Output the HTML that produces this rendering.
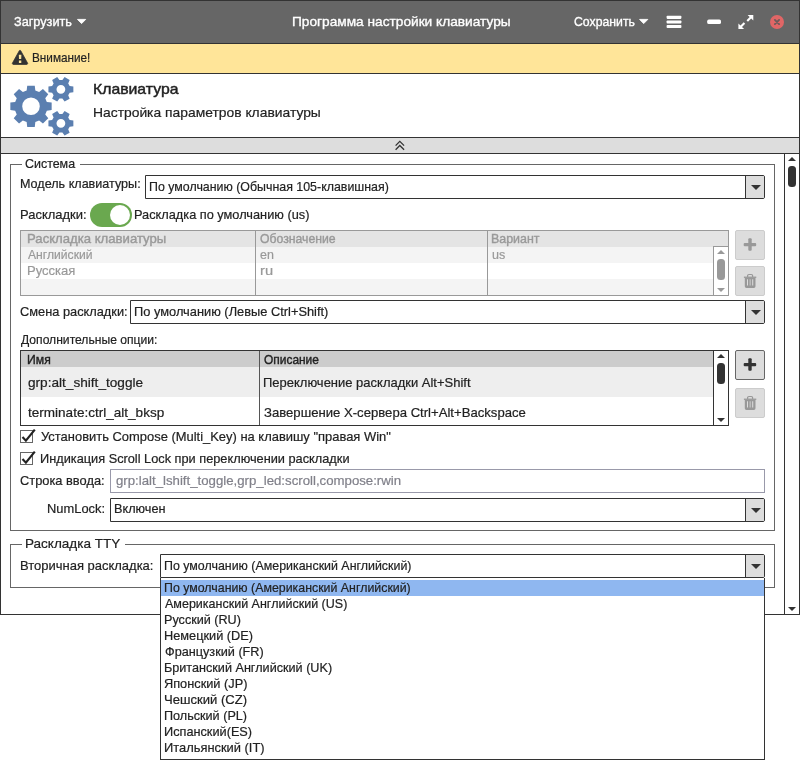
<!DOCTYPE html>
<html lang="ru">
<head>
<meta charset="utf-8">
<title>Программа настройки клавиатуры</title>
<style>
html,body{margin:0;padding:0;background:#fff;}
body{width:800px;height:761px;position:relative;overflow:hidden;font-family:"Liberation Sans",sans-serif;font-size:13px;color:#222;}
.abs{position:absolute;}
#txt{position:absolute;left:0;top:0;width:800px;height:761px;will-change:transform;}
.t{position:absolute;white-space:nowrap;line-height:16px;height:16px;transform-origin:0 50%;display:inline-block;-webkit-text-stroke:0.2px;}
#win{left:0;top:0;width:798px;height:613px;border:1px solid #333;background:#fff;}
#hdr{left:1px;top:1px;width:798px;height:42px;background:#666;}
#hdrline{left:1px;top:43px;width:798px;height:1px;background:#333;}
#warn{left:1px;top:44px;width:798px;height:29px;background:#ffe599;}
#warnline{left:1px;top:73px;width:798px;height:1px;background:#333;}
#bar{left:1px;top:137px;width:798px;height:15px;background:#ddd;border-top:1px solid #333;border-bottom:1px solid #333;}
#sbar{left:784px;top:154px;width:1px;height:460px;background:#333;}
.sel{position:absolute;box-sizing:border-box;border:1px solid #333;background:#fff;height:24px;border-radius:0 2px 2px 0;}
.sel .btn{position:absolute;right:0;top:0;width:18px;height:22px;background:#ddd;border-left:1px solid #333;border-radius:0 1px 1px 0;}
.sel .btn:after{content:"";position:absolute;left:4.5px;top:9px;border-left:5px solid transparent;border-right:5px solid transparent;border-top:5px solid #333;}
.fs{position:absolute;box-sizing:border-box;border:1px solid #666;}
.gap{position:absolute;background:#fff;height:3px;}
.tri-u{position:absolute;width:0;height:0;border-left:4.5px solid transparent;border-right:4.5px solid transparent;border-bottom:4.5px solid #333;}
.tri-d{position:absolute;width:0;height:0;border-left:4.5px solid transparent;border-right:4.5px solid transparent;border-top:4.5px solid #333;}
.thumb{position:absolute;width:8px;border-radius:3.5px;background:#333;}
.tbl{position:absolute;box-sizing:border-box;}
.row{position:absolute;left:0;}
.ibtn{position:absolute;box-sizing:border-box;width:30px;height:30px;border-radius:2px;background:#ddd;border:1px solid #ccc;}
.cb{position:absolute;box-sizing:border-box;width:13px;height:13px;border:1px solid #666;background:#fff;}
</style>
</head>
<body>
<div id="win" class="abs"></div>
<div id="hdr" class="abs"></div>
<div id="hdrline" class="abs"></div>
<div id="warn" class="abs"></div>
<div id="warnline" class="abs"></div>
<div id="bar" class="abs"></div>

<!-- header icons -->
<svg class="abs" style="left:0;top:0" width="800" height="44" viewBox="0 0 800 44">
  <path d="M77.5 19.4h8.2l-4.1 4.2z" fill="#fff" stroke="#fff" stroke-width="0.9" stroke-linejoin="round"/>
  <path d="M639.6 19.4h8.2l-4.1 4.2z" fill="#fff" stroke="#fff" stroke-width="0.9" stroke-linejoin="round"/>
  <g fill="#fff">
    <rect x="666.6" y="15.8" width="14.8" height="3.1" rx="0.8"/>
    <rect x="666.6" y="20.4" width="14.8" height="3.1" rx="0.8"/>
    <rect x="666.6" y="25" width="14.8" height="3.1" rx="0.8"/>
    <rect x="707.2" y="19.6" width="13.8" height="4.5" rx="1.6"/>
  </g>
  <g fill="#fff">
    <path d="M753.3 14.9V20.5L751.19 18.44 747.99 21.64 746.51 20.16 749.71 16.96 747.6 14.9Z"/>
    <path d="M738.4 29.1V23.5L740.51 25.56 743.71 22.36 745.19 23.84 741.99 27.04 744.1 29.1Z"/>
  </g>
  <circle cx="777" cy="22" r="7" fill="#e06666"/>
  <path d="M774.9 19.9l4.2 4.2M779.1 19.9l-4.2 4.2" stroke="#6a5a5a" stroke-width="1.8" stroke-linecap="round"/>
</svg>

<!-- warning icon -->
<svg class="abs" style="left:10px;top:46px" width="22" height="24" viewBox="10 46 22 24">
  <path d="M19.3 50.7 L12.5 63 a0.9 0.9 0 0 0 0.8 1.4 h13.4 a0.9 0.9 0 0 0 0.8 -1.4 L20.7 50.7 a0.8 0.8 0 0 0 -1.4 0z" fill="#333" stroke="#333" stroke-width="0.8" stroke-linejoin="round"/>
  <path d="M18.8 54.7h2.6l-0.2 4.3h-2.2z M18.9 60.5h2.4v2.4h-2.4z" fill="#ffe599"/>
</svg>

<svg class="abs" style="left:0;top:74px" width="90" height="64" viewBox="0 74 90 64"><path fill="#5b7fb0" fill-rule="evenodd" d="M46.82 101.97 L51.66 102.53 L51.66 110.07 L46.82 110.63 L45.25 114.43 L48.28 118.24 L42.94 123.58 L39.13 120.55 L35.33 122.12 L34.77 126.96 L27.23 126.96 L26.67 122.12 L22.87 120.55 L19.06 123.58 L13.72 118.24 L16.75 114.43 L15.18 110.63 L10.34 110.07 L10.34 102.53 L15.18 101.97 L16.75 98.17 L13.72 94.36 L19.06 89.02 L22.87 92.05 L26.67 90.48 L27.23 85.64 L34.77 85.64 L35.33 90.48 L39.13 92.05 L42.94 89.02 L48.28 94.36 L45.25 98.17Z M22.20 106.30 a8.80 8.80 0 1 0 17.60 0 a8.80 8.80 0 1 0 -17.60 0Z M69.68 85.93 L73.36 86.38 L73.36 92.22 L69.68 92.67 L68.21 95.22 L69.66 98.63 L64.60 101.55 L62.37 98.58 L59.43 98.58 L57.20 101.55 L52.14 98.63 L53.59 95.22 L52.12 92.67 L48.44 92.22 L48.44 86.38 L52.12 85.93 L53.59 83.38 L52.14 79.97 L57.20 77.05 L59.43 80.02 L62.37 80.02 L64.60 77.05 L69.66 79.97 L68.21 83.38Z M56.50 89.30 a4.40 4.40 0 1 0 8.80 0 a4.40 4.40 0 1 0 -8.80 0Z M69.68 119.93 L73.36 120.38 L73.36 126.22 L69.68 126.67 L68.21 129.22 L69.66 132.63 L64.60 135.55 L62.37 132.58 L59.43 132.58 L57.20 135.55 L52.14 132.63 L53.59 129.22 L52.12 126.67 L48.44 126.22 L48.44 120.38 L52.12 119.93 L53.59 117.38 L52.14 113.97 L57.20 111.05 L59.43 114.02 L62.37 114.02 L64.60 111.05 L69.66 113.97 L68.21 117.38Z M56.50 123.30 a4.40 4.40 0 1 0 8.80 0 a4.40 4.40 0 1 0 -8.80 0Z"/></svg>

<!-- collapse chevrons -->
<svg class="abs" style="left:390px;top:138px" width="20" height="15" viewBox="390 138 20 15">
  <path d="M395.6 145.6 L399.8 141.4 L404.1 145.6 M395.6 149.7 L399.8 145.5 L404.1 149.7" fill="none" stroke="#333" stroke-width="1.3"/>
</svg>

<!-- main scrollbar -->
<div id="sbar" class="abs"></div>
<div class="tri-u" style="left:787.7px;top:156.8px"></div>
<div class="thumb" style="left:788px;top:166px;height:21px"></div>
<div class="tri-d" style="left:787.7px;top:607px"></div>

<!-- fieldset 1 -->
<div class="fs" style="left:10px;top:164px;width:765px;height:367px"></div>
<div class="gap" style="left:21.5px;top:163px;width:58px"></div>

<div class="sel" style="left:145px;top:175px;width:620px"><div class="btn"></div></div>

<!-- toggle -->
<div class="abs" style="left:90px;top:203px;width:42px;height:24px;border-radius:12px;background:#6aa84f;"></div>
<div class="abs" style="left:109.5px;top:205px;width:20px;height:20px;border-radius:10px;background:#fff;"></div>

<!-- table 1 -->
<div class="tbl" style="left:20px;top:230px;width:709px;height:66px;border:1px solid #999;background:#fff;overflow:hidden">
  <div class="row" style="top:0;width:707px;height:16px;background:#e4e4e4"></div>
  <div class="row" style="top:16px;width:693px;height:16px;background:#f4f4f4"></div>
  <div class="row" style="top:48px;width:693px;height:16px;background:#f4f4f4"></div>
  <div class="abs" style="left:234px;top:0;width:1px;height:64px;background:#999"></div>
  <div class="abs" style="left:466px;top:0;width:1px;height:64px;background:#999"></div>
  <div class="abs" style="left:692px;top:15px;width:15px;height:49px;background:#fff;border-left:1px solid #999;border-top:1px solid #999"></div>
</div>
<div class="tri-u" style="left:716.7px;top:249.7px;border-bottom-color:#999"></div>
<div class="thumb" style="left:717px;top:259px;height:21px;background:#999"></div>
<div class="tri-d" style="left:716.7px;top:288px;border-top-color:#999"></div>

<div class="ibtn" style="left:735px;top:230px"></div>
<div class="ibtn" style="left:735px;top:266px"></div>
<svg class="abs" style="left:735px;top:230px" width="30" height="66" viewBox="735 230 30 66">
  <g fill="#999"><rect x="743.7" y="243" width="12.5" height="3.2" rx="1"/><rect x="748.3" y="238.3" width="3.4" height="12.5" rx="1"/></g>
  <g fill="#999">
    <path d="M743.9 276.6h12.4v1.3h-12.4z"/>
    <path d="M747.6 277v-1.2a1.3 1.3 0 0 1 1.3 -1.3h2.4a1.3 1.3 0 0 1 1.3 1.3v1.2" fill="none" stroke="#999" stroke-width="1.2"/>
    <path fill-rule="evenodd" d="M744.8 277.8h10.7v8.5a1.6 1.6 0 0 1 -1.6 1.6h-7.5a1.6 1.6 0 0 1 -1.6 -1.6z M747 279.2v6.3h1v-6.3z M749.7 279.2v6.3h0.8v-6.3z M752.2 279.2v6.3h1v-6.3z"/>
  </g>
</svg>

<div class="sel" style="left:130px;top:300px;width:635px"><div class="btn"></div></div>

<!-- table 2 -->
<div class="tbl" style="left:20px;top:350px;width:709px;height:76px;border:1px solid #333;background:#fff;overflow:hidden">
  <div class="row" style="top:0;width:693px;height:16px;background:#ccc"></div>
  <div class="row" style="top:16px;width:693px;height:30px;background:#eee"></div>
  <div class="abs" style="left:238px;top:0;width:1px;height:74px;background:#555"></div>
  <div class="abs" style="left:692px;top:0;width:15px;height:74px;background:#fff;border-left:1px solid #333"></div>
</div>
<div class="tri-u" style="left:716.7px;top:353.8px"></div>
<div class="thumb" style="left:717px;top:363px;height:21px"></div>
<div class="tri-d" style="left:716.7px;top:418px"></div>

<div class="ibtn" style="left:735px;top:350px;border-color:#666"></div>
<div class="ibtn" style="left:735px;top:388px"></div>
<svg class="abs" style="left:735px;top:350px" width="30" height="70" viewBox="735 350 30 70">
  <g fill="#333"><rect x="743.7" y="363" width="12.5" height="3.2" rx="1"/><rect x="748.3" y="358.3" width="3.4" height="12.5" rx="1"/></g>
  <g fill="#999" transform="translate(0 122)">
    <path d="M743.9 276.6h12.4v1.3h-12.4z"/>
    <path d="M747.6 277v-1.2a1.3 1.3 0 0 1 1.3 -1.3h2.4a1.3 1.3 0 0 1 1.3 1.3v1.2" fill="none" stroke="#999" stroke-width="1.2"/>
    <path fill-rule="evenodd" d="M744.8 277.8h10.7v8.5a1.6 1.6 0 0 1 -1.6 1.6h-7.5a1.6 1.6 0 0 1 -1.6 -1.6z M747 279.2v6.3h1v-6.3z M749.7 279.2v6.3h0.8v-6.3z M752.2 279.2v6.3h1v-6.3z"/>
  </g>
</svg>

<!-- checkboxes -->
<div class="cb" style="left:20px;top:430px"></div>
<div class="cb" style="left:20px;top:452px"></div>
<svg class="abs" style="left:18px;top:426px" width="22" height="42" viewBox="18 426 22 42">
  <path d="M22.5 437.1 L25.9 440.7 L34.8 429.6" fill="none" stroke="#222" stroke-width="2.2"/>
  <path d="M22.5 459.1 L25.9 462.7 L34.8 451.6" fill="none" stroke="#222" stroke-width="2.2"/>
</svg>

<!-- input -->
<div class="abs" style="left:110px;top:469px;width:653px;height:22px;border:1px solid #9999aa;background:#fff"></div>
<div class="sel" style="left:110px;top:498px;width:655px"><div class="btn"></div></div>

<!-- fieldset 2 -->
<div class="fs" style="left:10px;top:544px;width:765px;height:44px"></div>
<div class="gap" style="left:22px;top:543px;width:103px"></div>
<div class="sel" style="left:160px;top:554px;width:605px"><div class="btn"></div></div>

<!-- dropdown -->
<div class="abs" style="left:160px;top:578px;width:603px;height:181px;border:1px solid #333;border-top:none;background:#fff"></div>
<div class="abs" style="left:161px;top:580px;width:603px;height:16px;background:#8fb7f0"></div>

<div id="txt">
<span class="t" id="t_load" style="left:14.14px;top:14px;font-size:13.5px;line-height:15px;height:15px;color:#fff;-webkit-text-stroke:0.35px;transform:scaleX(0.9403);">Загрузить</span>
<span class="t" id="t_title" style="left:292.09px;top:14px;font-size:13.5px;line-height:15px;height:15px;color:#fff;-webkit-text-stroke:0.35px;transform:scaleX(1.0136);">Программа настройки клавиатуры</span>
<span class="t" id="t_save" style="left:574.40px;top:14px;font-size:13.5px;line-height:15px;height:15px;color:#fff;-webkit-text-stroke:0.35px;transform:scaleX(0.9079);">Сохранить</span>
<span class="t" id="t_warn" style="left:31.83px;top:50px;font-size:13.5px;line-height:15px;height:15px;color:#222;transform:scaleX(0.8708);">Внимание!</span>
<span class="t" id="t_h1" style="left:93.15px;top:80px;font-size:15px;line-height:17px;height:17px;color:#222;-webkit-text-stroke:0.45px;transform:scaleX(1.0519);">Клавиатура</span>
<span class="t" id="t_h2" style="left:93.07px;top:105px;font-size:13.5px;line-height:15px;height:15px;color:#222;transform:scaleX(1.0261);">Настройка параметров клавиатуры</span>
<span class="t" id="t_leg1" style="left:25.07px;top:156px;font-size:13px;line-height:15px;height:15px;color:#222;transform:scaleX(0.9568);">Система</span>
<span class="t" id="t_model" style="left:19.83px;top:176px;font-size:13px;line-height:15px;height:15px;color:#222;transform:scaleX(0.9676);">Модель клавиатуры:</span>
<span class="t" id="t_modelv" style="left:149.30px;top:179px;font-size:13px;line-height:15px;height:15px;color:#222;transform:scaleX(0.9531);">По умолчанию (Обычная 105-клавишная)</span>
<span class="t" id="t_lay" style="left:19.80px;top:207px;font-size:13px;line-height:15px;height:15px;color:#222;transform:scaleX(0.9966);">Раскладки:</span>
<span class="t" id="t_laydef" style="left:133.77px;top:207px;font-size:13px;line-height:15px;height:15px;color:#222;transform:scaleX(0.9818);">Раскладка по умолчанию (us)</span>
<span class="t" id="t_th1" style="left:27.17px;top:231px;font-size:13px;line-height:15px;height:15px;color:#999;-webkit-text-stroke:0.4px;transform:scaleX(1.0106);">Раскладка клавиатуры</span>
<span class="t" id="t_th2" style="left:259.68px;top:231px;font-size:13px;line-height:15px;height:15px;color:#999;-webkit-text-stroke:0.4px;transform:scaleX(0.9403);">Обозначение</span>
<span class="t" id="t_th3" style="left:491.32px;top:231px;font-size:13px;line-height:15px;height:15px;color:#999;-webkit-text-stroke:0.4px;transform:scaleX(0.9548);">Вариант</span>
<span class="t" id="t_r1a" style="left:28.00px;top:247px;font-size:13px;line-height:15px;height:15px;color:#999;transform:scaleX(0.9332);">Английский</span>
<span class="t" id="t_r1b" style="left:260.18px;top:247px;font-size:13px;line-height:15px;height:15px;color:#999;transform:scaleX(0.9583);">en</span>
<span class="t" id="t_r1c" style="left:491.53px;top:247px;font-size:13px;line-height:15px;height:15px;color:#999;transform:scaleX(0.9654);">us</span>
<span class="t" id="t_r2a" style="left:27.00px;top:263px;font-size:13px;line-height:15px;height:15px;color:#999;transform:scaleX(1.0033);">Русская</span>
<span class="t" id="t_r2b" style="left:259.77px;top:263px;font-size:13px;line-height:15px;height:15px;color:#999;transform:scaleX(1.1291);">ru</span>
<span class="t" id="t_sw" style="left:20.36px;top:304px;font-size:13px;line-height:15px;height:15px;color:#222;transform:scaleX(0.9844);">Смена раскладки:</span>
<span class="t" id="t_swv" style="left:133.81px;top:304px;font-size:13px;line-height:15px;height:15px;color:#222;transform:scaleX(0.9872);">По умолчанию (Левые Ctrl+Shift)</span>
<span class="t" id="t_opt" style="left:20.80px;top:332px;font-size:13px;line-height:15px;height:15px;color:#222;transform:scaleX(0.9317);">Дополнительные опции:</span>
<span class="t" id="t_oh1" style="left:26.73px;top:352px;font-size:13px;line-height:15px;height:15px;color:#222;-webkit-text-stroke:0.4px;transform:scaleX(0.9371);">Имя</span>
<span class="t" id="t_oh2" style="left:263.88px;top:352px;font-size:13px;line-height:15px;height:15px;color:#222;-webkit-text-stroke:0.4px;transform:scaleX(0.9181);">Описание</span>
<span class="t" id="t_o1a" style="left:27.67px;top:375px;font-size:13px;line-height:15px;height:15px;color:#222;transform:scaleX(1.0476);">grp:alt_shift_toggle</span>
<span class="t" id="t_o1b" style="left:263.40px;top:375px;font-size:13px;line-height:15px;height:15px;color:#222;transform:scaleX(0.9990);">Переключение раскладки Alt+Shift</span>
<span class="t" id="t_o2a" style="left:27.94px;top:405px;font-size:13px;line-height:15px;height:15px;color:#222;transform:scaleX(1.0414);">terminate:ctrl_alt_bksp</span>
<span class="t" id="t_o2b" style="left:263.97px;top:405px;font-size:13px;line-height:15px;height:15px;color:#222;transform:scaleX(1.0094);">Завершение X-сервера Ctrl+Alt+Backspace</span>
<span class="t" id="t_cb1" style="left:40.67px;top:429px;font-size:13px;line-height:15px;height:15px;color:#222;transform:scaleX(0.9949);">Установить Compose (Multi_Key) на клавишу &quot;правая Win&quot;</span>
<span class="t" id="t_cb2" style="left:40.02px;top:451px;font-size:13px;line-height:15px;height:15px;color:#222;transform:scaleX(0.9815);">Индикация Scroll Lock при переключении раскладки</span>
<span class="t" id="t_inl" style="left:20.46px;top:473px;font-size:13px;line-height:15px;height:15px;color:#222;transform:scaleX(0.9878);">Строка ввода:</span>
<span class="t" id="t_inv" style="left:116.18px;top:473px;font-size:13px;line-height:15px;height:15px;color:#80808a;transform:scaleX(1.0169);">grp:lalt_lshift_toggle,grp_led:scroll,compose:rwin</span>
<span class="t" id="t_nl" style="left:46.91px;top:501px;font-size:13px;line-height:15px;height:15px;color:#222;transform:scaleX(0.9916);">NumLock:</span>
<span class="t" id="t_nlv" style="left:113.72px;top:501px;font-size:13px;line-height:15px;height:15px;color:#222;transform:scaleX(0.9765);">Включен</span>
<span class="t" id="t_leg2" style="left:25.06px;top:536px;font-size:13px;line-height:15px;height:15px;color:#222;transform:scaleX(1.0406);">Раскладка TTY</span>
<span class="t" id="t_sec" style="left:20.00px;top:558px;font-size:13px;line-height:15px;height:15px;color:#222;transform:scaleX(0.9987);">Вторичная раскладка:</span>
<span class="t" id="t_secv" style="left:164.15px;top:558px;font-size:13px;line-height:15px;height:15px;color:#222;transform:scaleX(0.9541);">По умолчанию (Американский Английский)</span>
<span class="t" id="t_li0" style="left:164.15px;top:580px;font-size:13px;line-height:15px;height:15px;color:#222;transform:scaleX(0.9514);">По умолчанию (Американский Английский)</span>
<span class="t" id="t_li1" style="left:165.10px;top:596px;font-size:13px;line-height:15px;height:15px;color:#222;transform:scaleX(0.9621);">Американский Английский (US)</span>
<span class="t" id="t_li2" style="left:164.13px;top:612px;font-size:13px;line-height:15px;height:15px;color:#222;transform:scaleX(0.9701);">Русский (RU)</span>
<span class="t" id="t_li3" style="left:164.12px;top:628px;font-size:13px;line-height:15px;height:15px;color:#222;transform:scaleX(0.9809);">Немецкий (DE)</span>
<span class="t" id="t_li4" style="left:164.57px;top:644px;font-size:13px;line-height:15px;height:15px;color:#222;transform:scaleX(0.9752);">Французкий (FR)</span>
<span class="t" id="t_li5" style="left:164.13px;top:660px;font-size:13px;line-height:15px;height:15px;color:#222;transform:scaleX(0.9716);">Британский Английский (UK)</span>
<span class="t" id="t_li6" style="left:164.39px;top:676px;font-size:13px;line-height:15px;height:15px;color:#222;transform:scaleX(0.9815);">Японский (JP)</span>
<span class="t" id="t_li7" style="left:164.21px;top:692px;font-size:13px;line-height:15px;height:15px;color:#222;transform:scaleX(1.0052);">Чешский (CZ)</span>
<span class="t" id="t_li8" style="left:164.13px;top:708px;font-size:13px;line-height:15px;height:15px;color:#222;transform:scaleX(0.9706);">Польский (PL)</span>
<span class="t" id="t_li9" style="left:164.12px;top:724px;font-size:13px;line-height:15px;height:15px;color:#222;transform:scaleX(0.9788);">Испанский(ES)</span>
<span class="t" id="t_li10" style="left:164.11px;top:740px;font-size:13px;line-height:15px;height:15px;color:#222;transform:scaleX(0.9913);">Итальянский (IT)</span>
</div>
</body>
</html>
